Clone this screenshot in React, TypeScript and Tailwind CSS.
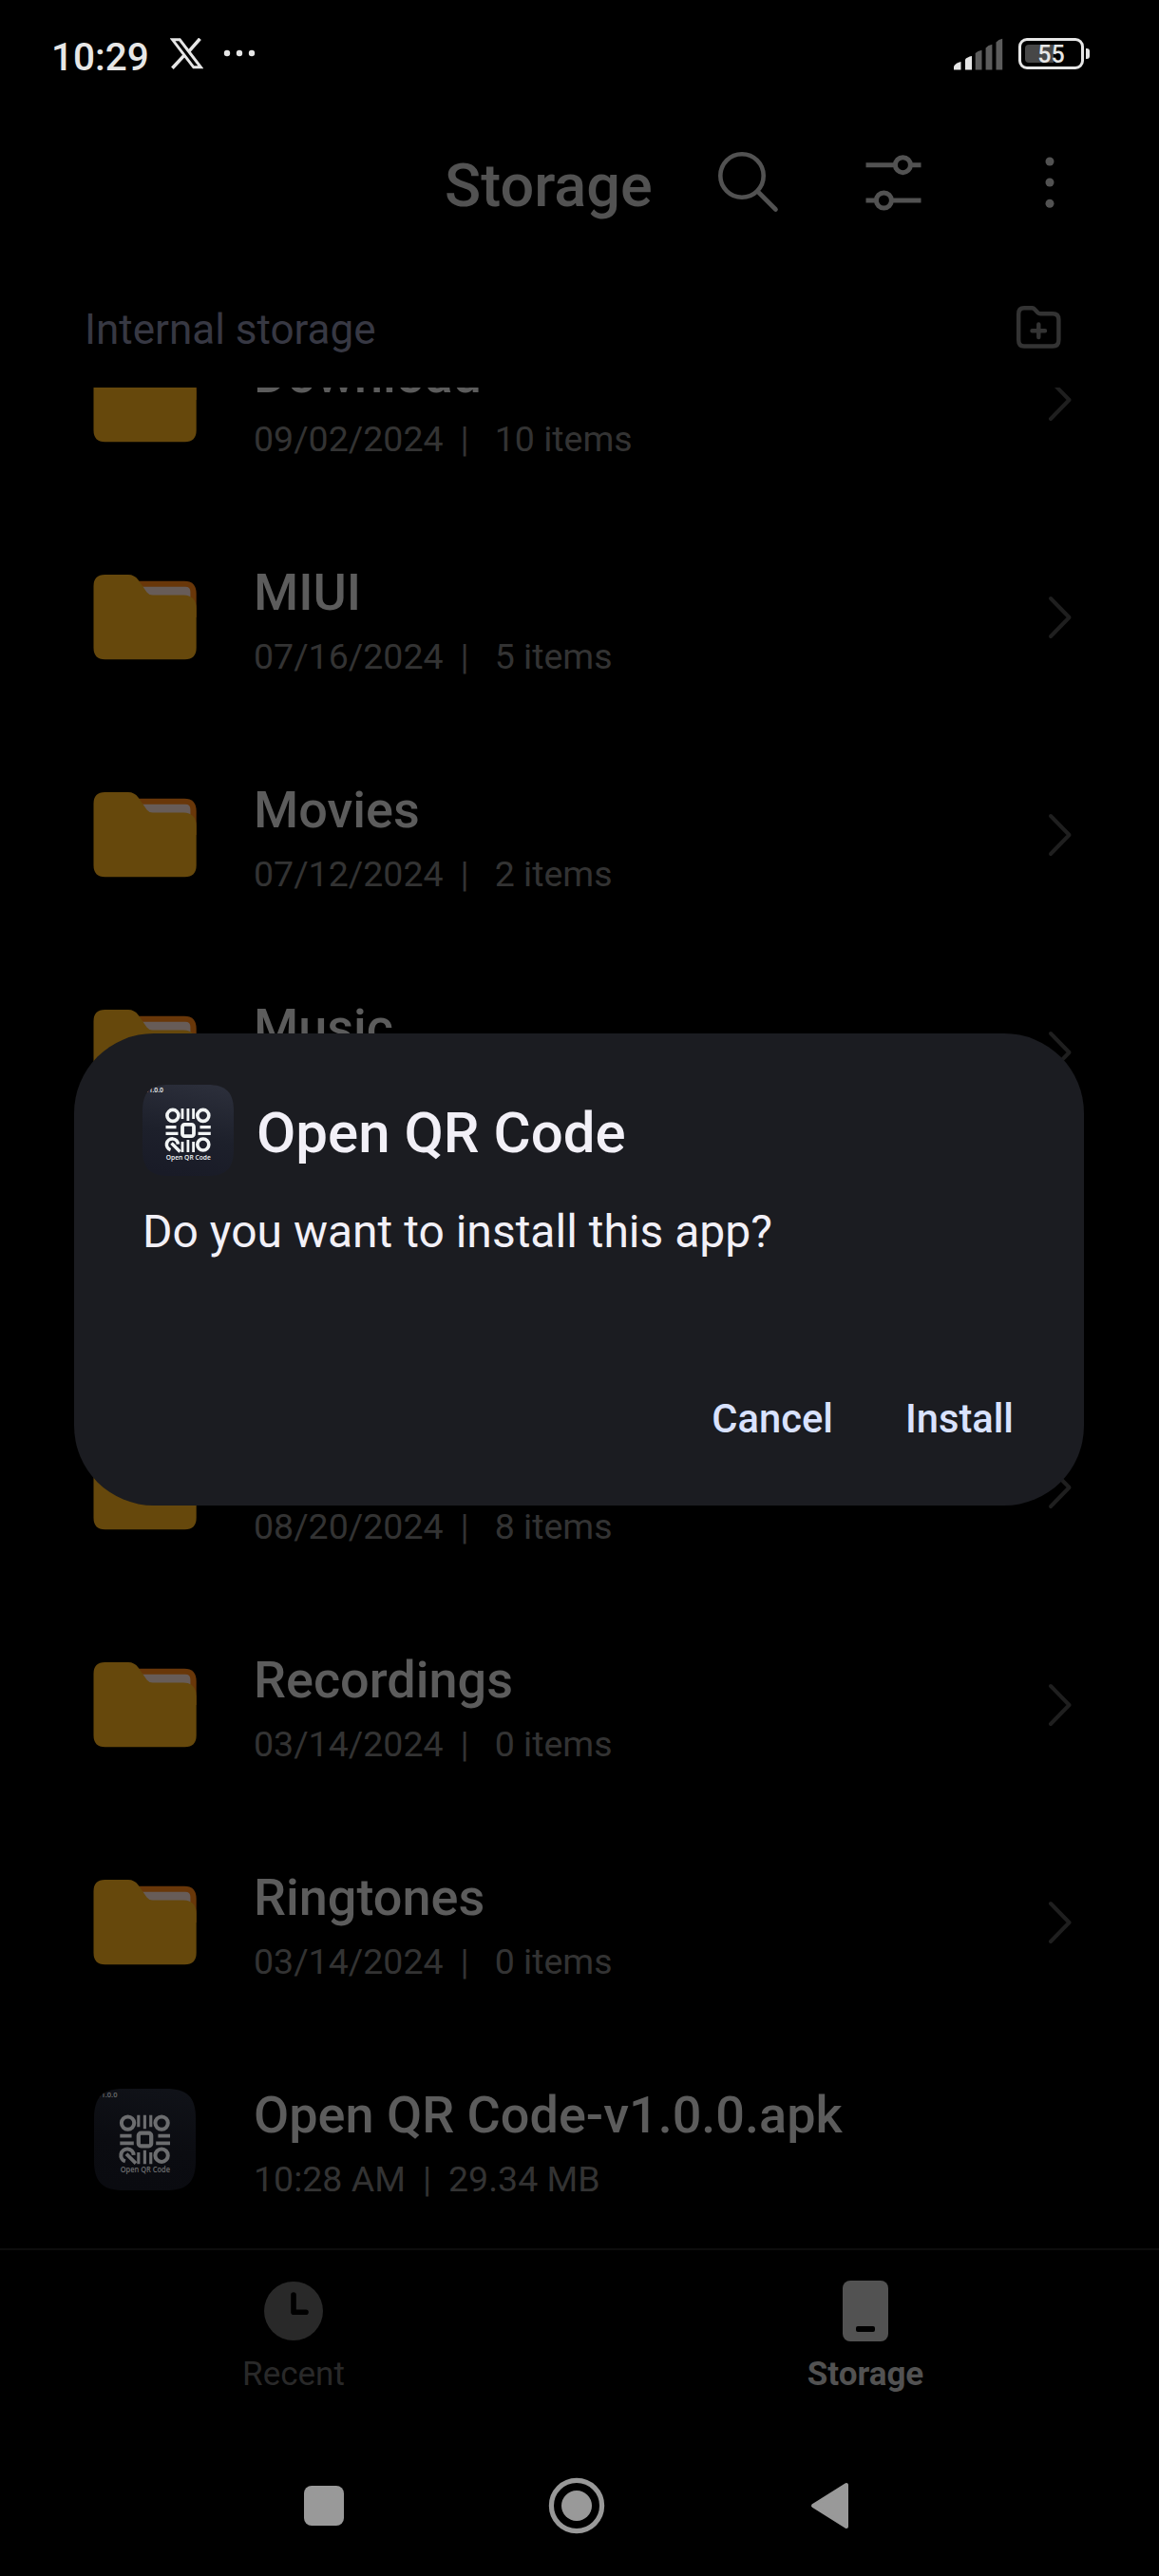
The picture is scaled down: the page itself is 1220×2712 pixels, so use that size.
import React from "react";

type Entry = { kind: "folder" | "apk"; name?: string; date?: string; detail?: string };

const entries: Entry[] = [
  { kind: "folder", name: "Download", date: "09/02/2024", detail: "10 items" },
  { kind: "folder", name: "MIUI", date: "07/16/2024", detail: "5 items" },
  { kind: "folder", name: "Movies", date: "07/12/2024", detail: "2 items" },
  { kind: "folder", name: "Music" },
  { kind: "folder" },
  { kind: "folder", date: "08/20/2024", detail: "8 items" },
  { kind: "folder", name: "Recordings", date: "03/14/2024", detail: "0 items" },
  { kind: "folder", name: "Ringtones", date: "03/14/2024", detail: "0 items" },
  { kind: "apk", name: "Open QR Code-v1.0.0.apk", date: "10:28 AM", detail: "29.34 MB" },
];

function FolderIcon() {
  return (
    <svg className="block h-[90px] w-[110px]" viewBox="0 0 110 90">
      <path d="M40 6.7H96Q108.7 6.7 108.7 20V45H40Z" fill="#693709" />
      <path d="M48 12.7H97Q102.4 12.7 102.4 18V40H48Z" fill="#675c58" />
      <path
        d="M12.5 0H37Q43.5 0 47.5 5.5L56.5 18.4Q58.8 21.4 62.5 21.4H95Q108.7 21.7 108.7 35.7V77Q108.7 89.2 96.5 89.2H12.5Q0.5 89.2 0.5 77V12Q0.5 0 12.5 0Z"
        fill="#66480c"
      />
    </svg>
  );
}

function QrAppIcon({ className, dim }: { className: string; dim?: boolean }) {
  const id = dim ? "tile-dim" : "tile";
  const ink = dim ? "#6c6d6f" : "#f2f5f5";
  return (
    <svg className={className} viewBox="0 0 96 96">
      <defs>
        <linearGradient id={id} x1="0.6" y1="0" x2="0.4" y2="1">
          <stop offset="0" stopColor={dim ? "#101218" : "#2b2e3a"} />
          <stop offset="0.55" stopColor={dim ? "#0b0c11" : "#1d202b"} />
          <stop offset="1" stopColor={dim ? "#0a0b10" : "#191b27"} />
        </linearGradient>
        <clipPath id={id + "-clip"}>
          <path d="M28 0H68C88 0 96 8 96 28V68C96 88 88 96 68 96H28C8 96 0 88 0 68V28C0 8 8 0 28 0Z" />
        </clipPath>
      </defs>
      <g clipPath={"url(#" + id + "-clip)"}>
        <rect width="96" height="96" fill={"url(#" + id + ")"} />
        <text
          x="3"
          y="8.2"
          fontSize="6.6"
          fontWeight="600"
          fontFamily="Open Sans, sans-serif"
          fill={ink}
          textLength="19"
          lengthAdjust="spacingAndGlyphs"
        >
          v1.0.0
        </text>
      </g>
      <g fill="none" stroke={ink} strokeWidth="3.6">
        <circle cx="31.9" cy="32.4" r="6" />
        <circle cx="63.8" cy="32.4" r="6" />
        <circle cx="63.8" cy="63" r="6" />
        <path d="M29.5 68.6A6 6 0 1 1 37.4 62.6" />
        <path d="M30.5 61.5L39.5 70.5" strokeWidth="3.4" />
        <rect x="42" y="41.8" width="12" height="12.4" rx="2.4" strokeWidth="3.8" />
        <path d="M42 25V36M47.9 25V38M53.6 25V36M42 60V71M47.9 58V71M53.6 60V71" strokeWidth="2.8" />
        <path d="M24.5 44.6H35.5M24.5 51.4H37.5M60.5 44.6H71.8M58.5 51.4H71.8" strokeWidth="3.4" />
      </g>
      <text
        x="24.8"
        y="79"
        fontSize="7.4"
        fontWeight="600"
        fontFamily="Open Sans, sans-serif"
        fill={ink}
        textLength="47"
        lengthAdjust="spacingAndGlyphs"
      >
        Open QR Code
      </text>
    </svg>
  );
}

function Chevron() {
  return (
    <svg className="block h-[48px] w-[28px]" viewBox="0 0 28 48" fill="none" stroke="#1f1f1f" strokeWidth="4" strokeLinecap="round" strokeLinejoin="round">
      <path d="M4 4L23.5 24L4 44" />
    </svg>
  );
}

function Row({ entry }: { entry: Entry }) {
  const folder = entry.kind === "folder";
  return (
    <div className="flex h-[229px] shrink-0 items-center pr-[90px] pl-[98px]">
      <div className="flex w-[110px] shrink-0">
        {folder ? <FolderIcon /> : <QrAppIcon dim className="ml-[1px] block size-[107px]" />}
      </div>
      <div className="ml-[59px] flex-1 pt-[8px] whitespace-pre">
        <div className="h-[76px] text-[54px] leading-[76px] font-medium text-[#5c5c5c]">{entry.name}</div>
        <div className="flex h-[59px] text-[37.5px] leading-[58px] text-[#333333]">
          {entry.date && (
            <>
              <span>{entry.date}</span>
              <span className={folder ? "mr-[27px] ml-[18px]" : "mr-[18px] ml-[18px]"}>|</span>
              <span>{entry.detail}</span>
            </>
          )}
        </div>
      </div>
      {folder && <Chevron />}
    </div>
  );
}

function StatusBar() {
  return (
    <div className="flex h-[114px] items-start pt-[36px] pr-[73px] pl-[54px] text-[#e6e6e6]">
      <span className="mt-[1px] h-[44px] w-[105px] text-[40.5px] leading-[46px] font-medium">10:29</span>
      <svg className="mt-[4px] ml-[20px] h-[33px] w-[35px]" viewBox="0 0 35 33" fill="none" stroke="currentColor">
        <path d="M2.6 1.8H10.2L32.4 30.8H24.8Z" strokeWidth="3" />
        <path d="M31.5 0.8L19.6 14.4M14.6 18.6L2.4 31.8" strokeWidth="3.6" />
      </svg>
      <svg className="mt-[16px] ml-[20px] h-[8px] w-[36px]" viewBox="0 0 36 8" fill="currentColor">
        <circle cx="5" cy="4" r="3.2" />
        <circle cx="18" cy="4" r="3.2" />
        <circle cx="31" cy="4" r="3.2" />
      </svg>
      <svg className="mt-[4px] ml-auto h-[34px] w-[52px]" viewBox="0 0 52 34">
        <path d="M0 33.5V30Q2 26 7.5 25V33.5Z" fill="#e6e6e6" />
        <path d="M12 33.5V22.5Q14 20 19 19V33.5Z" fill="#e6e6e6" />
        <path d="M22.7 33.5V16Q25 13.5 29.5 12.7V33.5Z" fill="#5c5c5c" />
        <path d="M33.6 33.5V10.5Q36 7.5 40.4 6.7V33.5Z" fill="#5c5c5c" />
        <path d="M44.5 33.5V4.5Q47 1.5 51.2 0.7V33.5Z" fill="#5c5c5c" />
      </svg>
      <div className="mt-[4px] ml-[16px] flex items-center">
        <div className="relative flex h-[33px] w-[69px] items-center justify-center rounded-[9px] border-[3px] border-[#e6e6e6]">
          <div className="absolute top-[4px] left-[4px] h-[19px] w-[30px] rounded-l-[4px] bg-[#474747]" />
          <span className="relative mt-[3px] text-[25px] leading-[26px] font-medium">55</span>
        </div>
        <div className="ml-[2px] h-[11px] w-[4px] rounded-r-[3px] bg-[#e6e6e6]" />
      </div>
    </div>
  );
}

function Header() {
  return (
    <div className="flex h-[166px] items-start pl-[468px] text-[#525252]">
      <h1 className="mt-[47px] w-[220px] text-[63px] leading-[70px] font-medium whitespace-nowrap">Storage</h1>
      <svg className="mt-[44px] ml-[66px] h-[66px] w-[66px]" viewBox="0 0 66 66" fill="none" stroke="currentColor" strokeWidth="4.6" strokeLinecap="round">
        <circle cx="27" cy="27" r="22.7" />
        <path d="M43.5 43.5L62.5 62.5" />
      </svg>
      <svg className="mt-[44px] ml-[88px] h-[66px] w-[66px]" viewBox="0 0 66 66" fill="none" stroke="currentColor" strokeWidth="5" strokeLinecap="butt">
        <path d="M3.5 15.7H34M50 15.7H61.5M3.5 53H14M30 53H61.5" />
        <circle cx="42.4" cy="15.7" r="8" />
        <circle cx="22.4" cy="53" r="8" />
      </svg>
      <svg className="mt-[48px] ml-[126px] h-[60px] w-[10px]" viewBox="0 0 10 60" fill="currentColor">
        <circle cx="5" cy="8" r="4.5" />
        <circle cx="5" cy="30" r="4.5" />
        <circle cx="5" cy="52.3" r="4.5" />
      </svg>
    </div>
  );
}

function PathBar() {
  return (
    <div className="flex h-[128px] items-start justify-between pr-[102px] pl-[89px]">
      <span className="mt-[37px] text-[44px] leading-[60px] text-[#373843]">Internal storage</span>
      <svg className="mt-[41px] h-[46px] w-[50px]" viewBox="0 0 50 46" fill="none" stroke="#333333" strokeWidth="4.4" strokeLinecap="round" strokeLinejoin="round">
        <path d="M10 3.3H18.5Q20 3.3 21 4.5L24.5 8.2Q25.5 9.3 27 9.3H40Q46.4 9.3 46.4 15.5V37Q46.4 43.5 40 43.5H10Q4.2 43.5 4.2 37V9.5Q4.2 3.3 10 3.3Z" />
        <path d="M25.3 20.5V34M18.5 27.2H32" />
      </svg>
    </div>
  );
}

function TabBar() {
  return (
    <div className="flex h-[345px] flex-col border-t-2 border-[#0d0d0d]">
      <div className="flex h-[191px] pl-[8px]">
        <div className="flex w-[602px] flex-col items-center text-[#292929]">
          <svg className="mt-[32px] h-[64px] w-[64px]" viewBox="0 0 64 64">
            <circle cx="32" cy="32" r="31" fill="currentColor" />
            <path d="M32 15V33.3H45" fill="none" stroke="#000" strokeWidth="5.6" strokeLinecap="round" strokeLinejoin="round" />
          </svg>
          <span className="mt-[15px] text-[35px] leading-[40px]">Recent</span>
        </div>
        <div className="flex w-[602px] flex-col items-center text-[#525252]">
          <div className="mt-[32px] flex h-[64px] w-[48px] items-end justify-center rounded-[8px] bg-current pb-[10px]">
            <div className="h-[6px] w-[20px] rounded-[2px] bg-black" />
          </div>
          <span className="mt-[15px] text-[35px] leading-[40px] font-bold">Storage</span>
        </div>
      </div>
      <div className="flex h-[152px] items-center pt-[4px] pl-[320px] text-[#999999]">
        <div className="size-[42px] rounded-[8px] bg-current" />
        <svg className="ml-[215px] size-[60px]" viewBox="0 0 60 60">
          <circle cx="30" cy="30" r="26.6" fill="none" stroke="currentColor" strokeWidth="5.2" />
          <circle cx="30" cy="30" r="16" fill="currentColor" />
        </svg>
        <svg className="ml-[215px] h-[50px] w-[42px]" viewBox="0 0 42 50">
          <path d="M39 3V47L4 25Z" fill="currentColor" stroke="currentColor" strokeWidth="4" strokeLinejoin="round" />
        </svg>
      </div>
    </div>
  );
}

function InstallDialog() {
  return (
    <div role="dialog" className="absolute top-[1088px] left-[78px] flex h-[497px] w-[1063px] flex-col rounded-[84px] bg-[#1b1c21] px-[72px] pt-[54px] text-[#f2f0f7]">
      <div className="flex items-start">
        <QrAppIcon className="block size-[96px]" />
        <h2 className="mt-[16px] ml-[24px] text-[60px] leading-[70px] font-medium whitespace-nowrap">Open QR Code</h2>
      </div>
      <p className="mt-[29px] text-[48px] leading-[60px]">Do you want to install this app?</p>
      <div className="mt-[142px] flex justify-end gap-[76px] pr-[2px] text-[41.7px] leading-[50px] font-medium text-[#d9e2ff]">
        <button>Cancel</button>
        <button>Install</button>
      </div>
    </div>
  );
}

export default function App() {
  return (
    <div className="relative flex h-[2712px] w-[1220px] flex-col overflow-hidden bg-black font-['Roboto',sans-serif]">
      <StatusBar />
      <Header />
      <PathBar />
      <div className="h-[1959px] overflow-hidden">
        <div className="mt-[-102px] flex flex-col">
          {entries.map((e, i) => (
            <Row key={i} entry={e} />
          ))}
        </div>
      </div>
      <TabBar />
      <InstallDialog />
    </div>
  );
}
